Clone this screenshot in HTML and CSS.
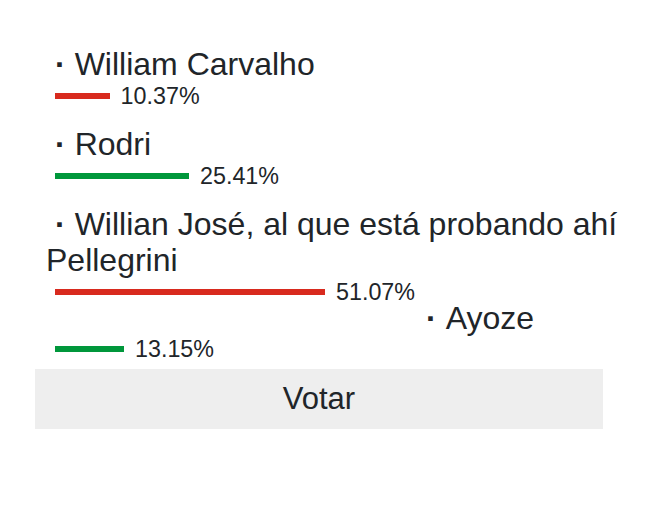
FILE: index.html
```html
<!DOCTYPE html>
<html lang="es">
<head>
<meta charset="utf-8">
<title>Encuesta</title>
<link rel="stylesheet" href="styles.css">
</head>
<body>
<form class="poll">
  <div class="option">
    <div class="name"><span class="dot">·</span>William Carvalho</div>
    <div class="result">
      <span class="bar bar--red" style="width: 54.6px"></span>
      <span class="pct">10.37%</span>
    </div>
  </div>
  <div class="option">
    <div class="name"><span class="dot">·</span>Rodri</div>
    <div class="result">
      <span class="bar bar--green" style="width: 134px"></span>
      <span class="pct">25.41%</span>
    </div>
  </div>
  <div class="option option--tight">
    <div class="name"><span class="dot">·</span>Willian José, al que está probando ahí Pellegrini</div>
    <div class="result">
      <span class="bar bar--red" style="width: 270px"></span>
      <span class="pct">51.07%</span>
    </div>
  </div>
  <div class="option option--offset">
    <div class="name"><span class="dot">·</span>Ayoze</div>
    <div class="result">
      <span class="bar bar--green" style="width: 69px"></span>
      <span class="pct">13.15%</span>
    </div>
  </div>
  <button type="button" class="vote">Votar</button>
</form>
</body>
</html>
```

FILE: styles.css
```css
html, body {
  margin: 0;
  padding: 0;
  background: #ffffff;
}

body {
  font-family: "Liberation Sans", Arial, sans-serif;
  color: #212529;
}

.poll {
  width: 615px;
  margin-left: 35px;
  padding-top: 46px;
  display: flex;
  flex-direction: column;
}

.option {
  padding-left: 11px;
  margin-bottom: 16px;
}

.option--tight {
  margin-bottom: 0;
}

.option--offset {
  margin-top: -4px;
  margin-bottom: 0;
}

.option--offset .name {
  line-height: 33px;
  padding-left: 371px;
}

.name {
  font-size: 32px;
  line-height: 36px;
}

.dot {
  margin-left: 9px;
  margin-right: 9px;
  font-weight: bold;
}

.result {
  display: flex;
  align-items: center;
  height: 28px;
  padding-left: 9px;
  gap: 11px;
}

.bar {
  display: block;
  height: 6px;
}

.bar--red {
  background: #d82a1e;
}

.bar--green {
  background: #00973b;
}

.pct {
  font-size: 23.3px;
  line-height: 28px;
}

.vote {
  width: 568px;
  height: 60px;
  margin-top: 6px;
  border: none;
  background: #eeeeee;
  color: #212529;
  font-family: "Liberation Sans", Arial, sans-serif;
  font-size: 31px;
  padding: 0;
}
```
